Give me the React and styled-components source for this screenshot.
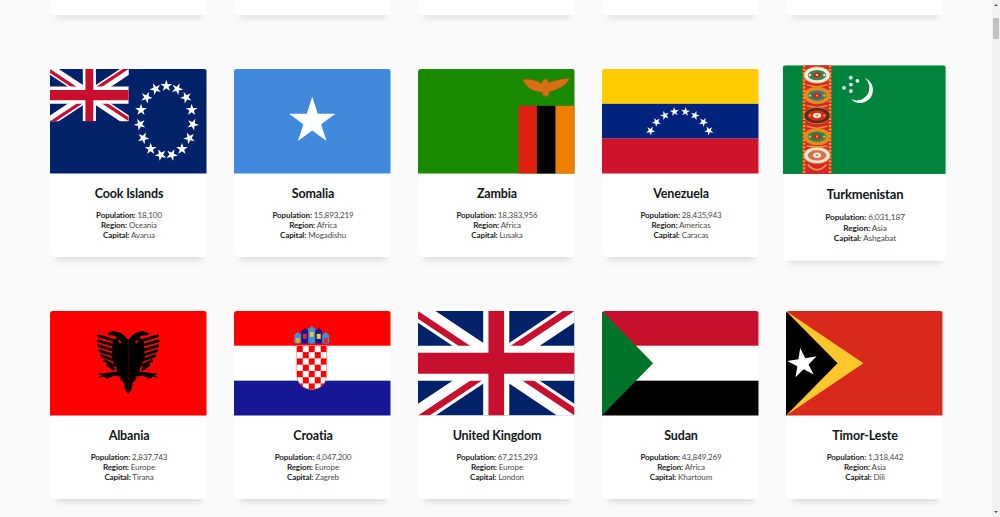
import React from 'react'
import styled, { createGlobalStyle } from 'styled-components'

const GlobalStyle = createGlobalStyle`
  html, body {
    margin: 0;
    height: 517px;
    overflow: hidden;
    background: #fafafa;
    font-family: "Lato", "Open Sans", sans-serif;
  }
`

// w/h of every flag drawing, same as the pixels on screen
const W = 157
const H = 105

const starPoints = (cx, cy, r, rot = 0) => {
  const pts = []
  for (let i = 0; i < 10; i++) {
    const rad = i % 2 === 0 ? r : r * 0.382
    const a = ((rot + i * 36 - 90) * Math.PI) / 180
    pts.push(`${(cx + rad * Math.cos(a)).toFixed(2)},${(cy + rad * Math.sin(a)).toFixed(2)}`)
  }
  return pts.join(' ')
}

const Star = ({ x, y, r, rot, fill = '#fff' }) => <polygon points={starPoints(x, y, r, rot)} fill={fill} />

const Stripes = ({ colors }) => (
  <>
    {colors.map((c, i) => (
      <rect key={c} x="0" y={(i * H) / colors.length} width={W} height={H / colors.length} fill={c} />
    ))}
  </>
)

const UnionJack = ({ id, width, height }) => (
  <svg x="0" y="0" width={width} height={height} viewBox="0 0 60 30" preserveAspectRatio="none">
    <clipPath id={id}>
      <path d="M30,15 h30 v15 z v15 h-30 z h-30 v-15 z v-15 h30 z" />
    </clipPath>
    <rect width="60" height="30" fill="#012169" />
    <path d="M0,0 L60,30 M60,0 L0,30" stroke="#fff" strokeWidth="6" />
    <path d="M0,0 L60,30 M60,0 L0,30" clipPath={`url(#${id})`} stroke="#C8102E" strokeWidth="4" />
    <path d="M30,0 v30 M0,15 h60" stroke="#fff" strokeWidth="10" />
    <path d="M30,0 v30 M0,15 h60" stroke="#C8102E" strokeWidth="6" />
  </svg>
)

const CookIslands = () => (
  <>
    <rect width={W} height={H} fill="#012169" />
    <UnionJack id="jack-ck" width={79} height={52.5} />
    {Array.from({ length: 15 }, (_, i) => {
      const a = (i * 24 * Math.PI) / 180
      return <Star key={i} x={116.7 + 26.7 * Math.sin(a)} y={52 - 35 * Math.cos(a)} r={6.2} rot={i * 24} />
    })}
  </>
)

const Somalia = () => (
  <>
    <rect width={W} height={H} fill="#4189dd" />
    <Star x={78.5} y={52.5} r={24.5} />
  </>
)

const Zambia = () => (
  <>
    <rect width={W} height={H} fill="#198a00" />
    <rect x="100.7" y="37" width="18.7" height="68" fill="#de2010" />
    <rect x="119.3" y="37" width="18.7" height="68" fill="#000" />
    <rect x="138" y="37" width="19" height="68" fill="#ef7d00" />
    <path
      d="M105 10.5 C112 9.5 119 11.5 124 14.5 L125.5 11 L128.5 9.5 L131 13.5 C137 12 145 9 152 9.5 C150 14 145 18 140 20 C137 21.5 133 22 131.5 23 L131 28 L129.5 26 L128 28.5 L126.5 26 L125 28 L125 23.5 C120 23 113 21 110 18 C108 16 106 13 105 10.5 Z"
      fill="#d96f10"
      stroke="#9a5a14"
      strokeWidth="0.6"
    />
  </>
)

const venezuelaStars = [
  [48.7, 62], [54.7, 53.3], [63, 46.7], [72.7, 43],
  [83.7, 43], [93.3, 46.7], [101.7, 53.3], [107.3, 62],
]

const Venezuela = () => (
  <>
    <Stripes colors={['#ffcc00', '#00247d', '#cf142b']} />
    {venezuelaStars.map(([x, y], i) => (
      <Star key={i} x={x} y={y} r={4.8} rot={-42 + i * 12} />
    ))}
  </>
)

const guls = [
  { y: 9.5, a: '#f4eee0', b: '#2f8a52', c: '#c8281e', dot: '#f4eee0' },
  { y: 29.2, a: '#e88a1a', b: '#2e7f7a', c: '#c8281e', dot: '#f2b33a' },
  { y: 48.6, a: '#5a2a1c', b: '#d8291c', c: '#f1e3c8', dot: '#e88a1a' },
  { y: 69, a: '#e88a1a', b: '#1f8a4c', c: '#c8281e', dot: '#f2b33a' },
  { y: 87, a: '#f4e6d4', b: '#e06a4a', c: '#f4e6d4', dot: '#7fa05a' },
]

const Turkmenistan = () => (
  <>
    <rect width={W} height={H} fill="#00843d" />
    <rect x="19" y="0" width="28" height={H} fill="#d22630" />
    <path d="M20.5 0 V105 M45.5 0 V105" stroke="#f29a1f" strokeWidth="2.6" strokeDasharray="2 1.4" />
    <path d="M23 19 L33 21 L43 19 M23 39 L33 41 L43 39 M23 59 L33 61 L43 59 M23 78 L33 79 L43 78" fill="none" stroke="#f29a1f" strokeWidth="1.4" />
    {guls.map(g => (
      <g key={g.y}>
        <ellipse cx="33" cy={g.y} rx="12.8" ry="8" fill={g.a} stroke="#e88a1a" strokeWidth="0.8" />
        <ellipse cx="33" cy={g.y} rx="9" ry="5" fill={g.b} />
        <ellipse cx="33" cy={g.y} rx="4" ry="2.6" fill={g.c} />
        <circle cx="26" cy={g.y} r="1.2" fill={g.dot} />
        <circle cx="40" cy={g.y} r="1.2" fill={g.dot} />
        <circle cx="33" cy={g.y} r="1" fill={g.dot} />
      </g>
    ))}
    <path d="M24 96 Q33 106 42 96" fill="none" stroke="#f29a1f" strokeWidth="1.6" />
    <path d="M79 12.3 A12.5 12.5 0 1 1 65.5 32.7 A12.3 12.3 0 0 0 79 12.3 Z" fill="#fff" />
    <circle cx="65.5" cy="12" r="1.8" fill="#fff" />
    <circle cx="72" cy="15" r="1.8" fill="#fff" />
    <circle cx="65.6" cy="18.6" r="1.8" fill="#fff" />
    <circle cx="59" cy="21.8" r="1.8" fill="#fff" />
    <circle cx="65.6" cy="25" r="1.8" fill="#fff" />
  </>
)

const featherTips = [[49, 25], [48.5, 30], [49, 35], [50, 40], [52, 45], [55, 50], [58, 54]]

const AlbaniaHalf = () => (
  <g fill="#000">
    <path d="M78.5 29 C76 26 72 21 66 20.5 C63 20 60 21 57 23 L60 24.5 C63 24 65 25 67 26 C66 28 64 29 63 29 L62 48 L66 56 L68 62 L72 64 L70 68 L74 72 L75 78 L78.5 83.5 Z" />
    <path d="M72 60 L58 62 L48 63 L52 64.5 L48 67 L54 66 L57 68 L64 65 L72 66 Z" />
    {featherTips.map(([x, y]) => (
      <path key={y} d={`M64 ${y + 4.5} L${x} ${y}`} fill="none" stroke="#000" strokeWidth="2.9" strokeLinecap="round" />
    ))}
    <path d="M68 29 L72 31 L70 33 Z" fill="#ff0000" />
  </g>
)

const Albania = () => (
  <>
    <rect width={W} height={H} fill="#ff0000" />
    <AlbaniaHalf />
    <g transform={`translate(${W} 0) scale(-1 1)`}>
      <AlbaniaHalf />
    </g>
  </>
)

const crownPieces = [
  { x: 60.5, w: 7, top: 21, fill: '#2f9ad6', band: '#e8a33a' },
  { x: 67.5, w: 7, top: 17, fill: '#171796', band: '#e0242a' },
  { x: 74.5, w: 7, top: 15, fill: '#2f9ad6', band: '#e8c23a' },
  { x: 81.5, w: 7, top: 17, fill: '#171796', band: '#f0d040' },
  { x: 88.5, w: 7, top: 21, fill: '#2f9ad6', band: '#e0242a' },
]

const Croatia = () => (
  <>
    <Stripes colors={['#ff0000', '#ffffff', '#171796']} />
    {crownPieces.map(p => (
      <g key={p.x}>
        <path
          d={`M${p.x} ${p.top + 3} L${p.x + p.w / 2} ${p.top} L${p.x + p.w} ${p.top + 3} L${p.x + p.w} 32 Q${p.x + p.w / 2} 34 ${p.x} 32 Z`}
          fill={p.fill}
        />
        <rect x={p.x + 1.5} y={p.top + 6} width={p.w - 3} height="5" fill={p.band} />
      </g>
    ))}
    <clipPath id="hr-shield">
      <path d="M63 35 H93 V64 C93 73 86 78.7 78 78.7 C70 78.7 63 73 63 64 Z" />
    </clipPath>
    <path d="M63 35 H93 V64 C93 73 86 78.7 78 78.7 C70 78.7 63 73 63 64 Z" fill="#fff" stroke="#ff8080" strokeWidth="0.8" />
    <g clipPath="url(#hr-shield)">
      {Array.from({ length: 35 }, (_, i) => {
        const col = i % 5
        const row = Math.floor(i / 5)
        return (col + row) % 2 === 0 ? (
          <rect key={i} x={63 + col * 6} y={35 + row * 6.3} width="6" height="6.3" fill="#f00" />
        ) : null
      })}
    </g>
  </>
)

const UnitedKingdom = () => <UnionJack id="jack-gb" width={W} height={H} />

const Sudan = () => (
  <>
    <Stripes colors={['#c8102e', '#ffffff', '#000000']} />
    <polygon points={`0,0 51.3,52.5 0,${H}`} fill="#007229" />
  </>
)

const TimorLeste = () => (
  <>
    <rect width={W} height={H} fill="#da291c" />
    <polygon points={`0,0 77.7,52.5 0,${H}`} fill="#ffc72c" />
    <polygon points={`0,0 51.7,52.5 0,${H}`} fill="#000" />
    <Star x={16.7} y={52.7} r={15.7} rot={-9} />
  </>
)

const rows = [
  [
    { name: 'Cook Islands', population: '18,100', region: 'Oceania', capital: 'Avarua', Flag: CookIslands },
    { name: 'Somalia', population: '15,893,219', region: 'Africa', capital: 'Mogadishu', Flag: Somalia },
    { name: 'Zambia', population: '18,383,956', region: 'Africa', capital: 'Lusaka', Flag: Zambia },
    { name: 'Venezuela', population: '28,435,943', region: 'Americas', capital: 'Caracas', Flag: Venezuela },
    { name: 'Turkmenistan', population: '6,031,187', region: 'Asia', capital: 'Ashgabat', Flag: Turkmenistan, hovered: true },
  ],
  [
    { name: 'Albania', population: '2,837,743', region: 'Europe', capital: 'Tirana', Flag: Albania },
    { name: 'Croatia', population: '4,047,200', region: 'Europe', capital: 'Zagreb', Flag: Croatia },
    { name: 'United Kingdom', population: '67,215,293', region: 'Europe', capital: 'London', Flag: UnitedKingdom },
    { name: 'Sudan', population: '43,849,269', region: 'Africa', capital: 'Khartoum', Flag: Sudan },
    { name: 'Timor-Leste', population: '1,318,442', region: 'Asia', capital: 'Dili', Flag: TimorLeste },
  ],
]

const CountryCard = ({ country }) => {
  const { Flag } = country
  return (
    <Card $hovered={country.hovered}>
      <FlagImage viewBox={`0 0 ${W} ${H}`} preserveAspectRatio="none">
        <Flag />
      </FlagImage>
      <CardBody>
        <CountryName>{country.name}</CountryName>
        <Fact><b>Population:</b> {country.population}</Fact>
        <Fact><b>Region:</b> {country.region}</Fact>
        <Fact><b>Capital:</b> {country.capital}</Fact>
      </CardBody>
    </Card>
  )
}

const App = () => {
  return (
    <>
      <GlobalStyle />
      <Page>
        <CountryGrid>
          {[0, 1, 2, 3, 4].map(i => <CardStub key={i} />)}
          {rows.flat().map(c => <CountryCard key={c.name} country={c} />)}
        </CountryGrid>
        <ScrollTrack>
          <ScrollArrow />
          <ScrollThumb />
          <ScrollArrow $down />
        </ScrollTrack>
      </Page>
    </>
  )
}

export default App

const Page = styled.div`
  display: flex;
  height: 517px;
  overflow: hidden;
  background: #fafafa;
`
const CountryGrid = styled.main`
  flex: 1;
  display: grid;
  grid-template-columns: repeat(5, 156px);
  grid-auto-rows: min-content;
  column-gap: 28px;
  row-gap: 54px;
  padding-left: 51px;
  overflow: hidden;
`
const cardShadow = '0 8px 6px -5px rgba(0, 0, 0, 0.13)'

const CardStub = styled.div`
  height: 15px;
  background: #fff;
  border-radius: 0 0 3px 3px;
  box-shadow: ${cardShadow};
`
const Card = styled.article`
  height: 188px;
  background: #fff;
  border-radius: 3px;
  box-shadow: ${cardShadow};
  transform: ${p => (p.$hovered ? 'scale(1.04)' : 'none')};
`
const FlagImage = styled.svg`
  display: block;
  width: 156.5px;
  height: 104.5px;
  margin-left: -1px;
  border-radius: 3px 3px 0 0;
`
const CardBody = styled.div`
  padding-top: 12px;
  text-align: center;
`
const CountryName = styled.h2`
  margin: 0 0 8px;
  font-size: 12.5px;
  line-height: 16px;
  font-weight: 700;
  letter-spacing: -0.15px;
  color: #111517;
`
const Fact = styled.p`
  margin: 0;
  font-size: 8px;
  line-height: 10px;
  letter-spacing: -0.1px;
  color: #4a4a4a;

  b {
    font-weight: 700;
    color: #1c1c1c;
  }
`
const ScrollTrack = styled.aside`
  width: 8px;
  display: flex;
  flex-direction: column;
  align-items: center;
  background: #f1f1f1;
`
const ScrollArrow = styled.span`
  width: 0;
  height: 0;
  margin: ${p => (p.$down ? 'auto 0 4px' : '4px 0 0')};
  border-left: 2px solid transparent;
  border-right: 2px solid transparent;
  border-bottom: ${p => (p.$down ? '0' : '2px solid #555')};
  border-top: ${p => (p.$down ? '2px solid #555' : '0')};
`
const ScrollThumb = styled.span`
  width: 6px;
  height: 21px;
  margin-top: 12px;
  background: #c1c1c1;
`
